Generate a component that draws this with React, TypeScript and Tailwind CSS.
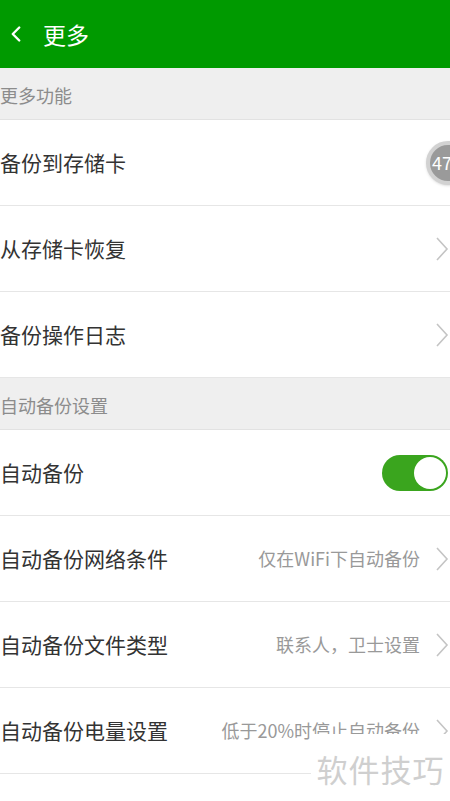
import { ChevronLeft } from 'lucide-react';

const font = { fontFamily: '"Noto Sans CJK SC", "Noto Sans", sans-serif' };

function Chevron() {
  return (
    <svg width="14" height="26" viewBox="0 0 14 26" fill="none" className="shrink-0">
      <path d="M2 2 L12 13 L2 24" stroke="#c4c4c4" strokeWidth="1.6" />
    </svg>
  );
}

function SectionHeader({ title }: { title: string }) {
  return (
    <div className="h-[52px] bg-[#efefef] flex items-center border-b border-[#e2e2e2]">
      <span className="text-[18px] text-[#8c8c8c] pt-[3px]">{title}</span>
    </div>
  );
}

function Row({ title, value, right }: { title: string; value?: string; right?: React.ReactNode }) {
  return (
    <div className="h-[86px] flex items-center justify-between border-b border-[#e6e6e6] bg-white">
      <span className="text-[21px] text-[#333]">{title}</span>
      {right ?? (
        <div className="flex items-center gap-[15px] pr-[1px]">
          {value && <span className="text-[18px] text-[#999]">{value}</span>}
          <Chevron />
        </div>
      )}
    </div>
  );
}

export default function App() {
  return (
    <div className="w-[450px] h-[801px] bg-white overflow-hidden relative" style={font}>
      <div className="h-[68px] bg-[#009a00] flex items-center gap-[14px] pl-[3px]">
        <ChevronLeft className="w-[26px] h-[26px] text-white" strokeWidth={2.2} />
        <span className="text-[23px] text-white">更多</span>
      </div>
      <SectionHeader title="更多功能" />
      <Row
        title="备份到存储卡"
        right={
          <div className="w-[44px] h-[44px] rounded-full bg-[#9a9a9a] border-[4px] border-[#d2d2d2] flex items-center justify-center translate-x-[20px] shadow">
            <span className="text-[18px] text-white -translate-x-[6px]">47</span>
          </div>
        }
      />
      <Row title="从存储卡恢复" />
      <Row title="备份操作日志" />
      <SectionHeader title="自动备份设置" />
      <Row
        title="自动备份"
        right={
          <div className="w-[66px] h-[36px] rounded-full bg-[#3aa51e] flex items-center justify-end pr-[2px] mr-[2px]">
            <div className="w-[32px] h-[32px] rounded-full bg-white" />
          </div>
        }
      />
      <Row title="自动备份网络条件" value="仅在WiFi下自动备份" />
      <Row title="自动备份文件类型" value="联系人，卫士设置" />
      <Row title="自动备份电量设置" value="低于20%时停止自动备份" />
      <div className="absolute left-[311px] top-[734px] w-[139px] h-[67px] bg-white flex items-start justify-center pt-[12px]">
        <span className="text-[31px] text-[#cfcfcf] tracking-[1px]">软件技巧</span>
      </div>
    </div>
  );
}
